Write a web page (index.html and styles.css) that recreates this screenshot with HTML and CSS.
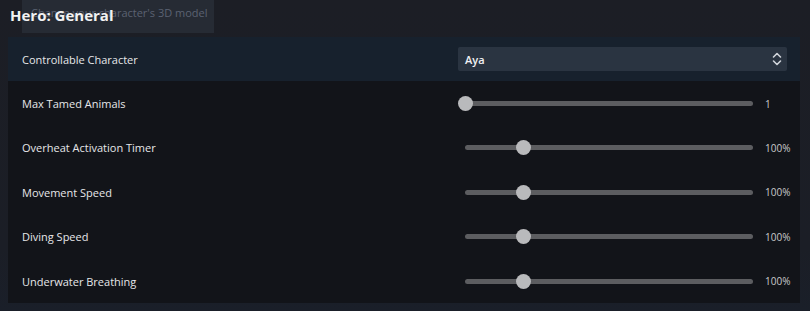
FILE: index.html
```html
<!DOCTYPE html>
<html>
    <head>
        <title>Hero: General</title>
        <link rel="stylesheet" href="styles.css">
    </head>
    <body>
        <div class="tooltip">Change your character's 3D model</div>
        <h1 class="title">Hero: General</h1>
        <div class="panel">
            <div class="row active">
                <span class="label">Controllable Character</span>
                <div class="select">
                    <span>Aya</span>
                    <svg width="10" height="16" viewBox="0 0 10 16">
                        <path d="M1.5 6 L5 2.5 L8.5 6 M1.5 10 L5 13.5 L8.5 10" fill="none" stroke="#d0d4da" stroke-width="1.6" stroke-linecap="round" stroke-linejoin="round"/>
                    </svg>
                </div>
            </div>
            <div class="row">
                <span class="label">Max Tamed Animals</span>
                <div class="slider">
                    <div class="track"><span class="thumb" style="left: 0%"></span></div>
                    <span class="value">1</span>
                </div>
            </div>
            <div class="row">
                <span class="label">Overheat Activation Timer</span>
                <div class="slider">
                    <div class="track"><span class="thumb" style="left: 20%"></span></div>
                    <span class="value">100%</span>
                </div>
            </div>
            <div class="row">
                <span class="label">Movement Speed</span>
                <div class="slider">
                    <div class="track"><span class="thumb" style="left: 20%"></span></div>
                    <span class="value">100%</span>
                </div>
            </div>
            <div class="row">
                <span class="label">Diving Speed</span>
                <div class="slider">
                    <div class="track"><span class="thumb" style="left: 20%"></span></div>
                    <span class="value">100%</span>
                </div>
            </div>
            <div class="row">
                <span class="label">Underwater Breathing</span>
                <div class="slider">
                    <div class="track"><span class="thumb" style="left: 20%"></span></div>
                    <span class="value">100%</span>
                </div>
            </div>
        </div>
    </body>
</html>
```

FILE: styles.css
```css
* {
    box-sizing: border-box;
}

body {
    margin: 0;
    height: 311px;
    position: relative;
    font-family: "Open Sans", "DejaVu Sans", sans-serif;
    background: linear-gradient(#1c1e25 0%, #1b1e26 80%, #1a1f29 100%);
    color: #e8e9eb;
    overflow: hidden;
}

.tooltip {
    position: absolute;
    left: 22px;
    top: 0;
    width: 192px;
    height: 33px;
    padding: 5px 0 0 9px;
    background-color: #262b34;
    color: #5b6272;
    font-size: 11px;
    white-space: nowrap;
}

.title {
    position: relative;
    margin: 0;
    padding: 5px 0 0 10px;
    height: 37px;
    font-size: 15px;
    font-weight: 700;
    color: #f2f2f2;
}

.panel {
    margin: 0 10px 0 8px;
    background-color: #121419;
}

.row {
    display: flex;
    align-items: center;
    height: 44.4px;
    padding: 0 13px 0 14px;
}

.row.active {
    background-color: #17212d;
}

.label {
    flex: 1;
    font-size: 11px;
    font-weight: 500;
    color: #e6e7e9;
}

.select {
    width: 329px;
    height: 24px;
    display: flex;
    align-items: center;
    justify-content: space-between;
    padding: 0 5px 0 7px;
    background-color: #2a3441;
    border-radius: 2px;
    font-size: 11px;
    font-weight: 600;
    color: #f0f1f3;
}

.slider {
    width: 329px;
    display: flex;
    align-items: center;
    padding-left: 7px;
}

.track {
    position: relative;
    flex-shrink: 0;
    width: 288px;
    height: 5px;
    border-radius: 3px;
    background-color: #5c5d60;
}

.thumb {
    position: absolute;
    top: -5px;
    width: 15px;
    height: 15px;
    margin-left: -7px;
    border-radius: 50%;
    background-color: #b9babc;
}

.value {
    margin-left: 12px;
    font-size: 10px;
    color: #c9cacc;
    white-space: nowrap;
}
```
